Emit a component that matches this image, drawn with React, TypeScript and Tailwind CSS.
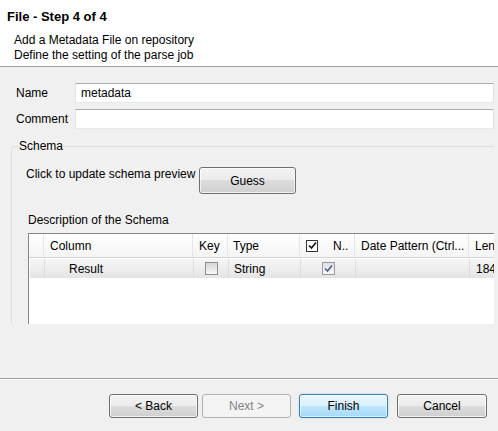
import React from 'react'

const btn =
  'w-[89px] h-[24px] rounded-[3px] border border-[#707070] bg-[linear-gradient(#f2f2f2,#ebebeb_50%,#dddddd_50%,#cfcfcf)] text-black flex items-center justify-center shadow-[inset_0_0_0_1px_rgba(255,255,255,0.7)]'

function Check({ color }: { color: string }) {
  return (
    <svg width="9" height="9" viewBox="0 0 9 9">
      <path d="M1 4.5 L3.5 7 L8 1.5" fill="none" stroke={color} strokeWidth="1.6" />
    </svg>
  )
}

export default function App() {
  return (
    <div
      className="w-[498px] h-[431px] bg-[#f0f0f0] overflow-hidden flex flex-col text-[12px] text-black"
      style={{ fontFamily: '"Liberation Sans", Arial, sans-serif' }}
    >
      {/* Wizard header */}
      <div className="h-[67px] shrink-0 bg-white border-b border-[#a0a0a0]">
        <div className="pl-[7px] pt-[9px] leading-[16px] font-bold text-[13px]">File - Step 4 of 4</div>
        <div className="pl-[14px] mt-[8px] leading-[15px]">
          <div>Add a Metadata File on repository</div>
          <div>Define the setting of the parse job</div>
        </div>
      </div>

      {/* Form */}
      <div className="w-[494px] h-[257px] shrink-0 overflow-hidden">
        <div className="flex items-center mt-[16px] pl-[16px]">
          <div className="w-[59px]">Name</div>
          <div className="w-[419px] h-[20px] bg-white border border-[#e2e3ea] border-t-[#abadb3] border-b-[#e3e9ef] flex items-center pl-[5px]">
            metadata
          </div>
        </div>
        <div className="flex items-center mt-[6px] pl-[16px]">
          <div className="w-[59px]">Comment</div>
          <div className="w-[419px] h-[20px] bg-white border border-[#e2e3ea] border-t-[#abadb3] border-b-[#e3e9ef]" />
        </div>

        {/* Schema group */}
        <div className="relative mt-[17px] ml-[11px] w-[500px] h-[300px] border border-[#d5dfe5] rounded-[3px] pt-[20px] pl-[14px]">
          <div className="absolute left-[6px] -top-[8px] px-[1px] bg-[#f0f0f0] leading-[15px]">Schema</div>

          <div className="flex items-start">
            <div className="w-[173px] leading-[15px]">Click to update schema preview</div>
            <button className="w-[97px] h-[27px] rounded-[3px] border border-[#707070] bg-[linear-gradient(#f2f2f2,#ebebeb_50%,#dddddd_50%,#cfcfcf)] shadow-[inset_0_0_0_1px_rgba(255,255,255,0.7)]">
              Guess
            </button>
          </div>

          <div className="mt-[19px] ml-[2px] leading-[15px]">Description of the Schema</div>

          {/* Schema table */}
          <div className="mt-[5px] ml-[2px] h-[200px] bg-white border border-[#828790]">
            <div className="grid grid-cols-[15px_149px_35px_72px_55px_114px_1fr] h-[24px] border-b border-[#d5d5d5] bg-[linear-gradient(#ffffff,#f4f4f4)]">
              <div className="border-r border-[#e5e5e5]" />
              <div className="border-r border-[#e5e5e5] flex items-center pl-[6px]">Column</div>
              <div className="border-r border-[#e5e5e5] flex items-center pl-[6px]">Key</div>
              <div className="border-r border-[#e5e5e5] flex items-center pl-[5px]">Type</div>
              <div className="border-r border-[#e5e5e5] flex items-center pl-[6px]">
                <div className="w-[12px] h-[12px] border border-[#333] bg-white flex items-center justify-center">
                  <Check color="#111" />
                </div>
                <span className="ml-[15px]">N..</span>
              </div>
              <div className="border-r border-[#e5e5e5] flex items-center pl-[6px] whitespace-nowrap">Date Pattern (Ctrl...</div>
              <div className="flex items-center pl-[6px]">Len</div>
            </div>
            <div className="grid grid-cols-[15px_149px_35px_72px_55px_114px_1fr] h-[19px] mt-[1px] mx-[1px] bg-[linear-gradient(#f6f6f6,#e4e4e4)]">
              <div className="border-r border-[#dcdcdc]" />
              <div className="border-r border-[#dcdcdc] flex items-center pl-[24px]">Result</div>
              <div className="border-r border-[#dcdcdc] flex items-center justify-center">
                <div className="w-[13px] h-[13px] border border-[#8f8f8f] bg-[linear-gradient(#d6d6d6,#f7f7f7)]" />
              </div>
              <div className="border-r border-[#dcdcdc] flex items-center pl-[5px]">String</div>
              <div className="border-r border-[#dcdcdc] flex items-center justify-center">
                <div className="w-[13px] h-[13px] border border-[#9a9a9a] bg-[linear-gradient(#e0e0e0,#f8f8f8)] flex items-center justify-center">
                  <Check color="#4a5f9c" />
                </div>
              </div>
              <div className="border-r border-[#dcdcdc]" />
              <div className="flex items-center pl-[6px]">184</div>
            </div>
          </div>
        </div>
      </div>

      {/* Footer */}
      <div className="mt-[54px] border-t border-[#a0a0a0]" />
      <div className="border-t border-white" />
      <div className="flex pt-[14px] pl-[109px]">
        <button className={btn}>&lt; Back</button>
        <button className="ml-[4px] w-[89px] h-[24px] rounded-[3px] border border-[#adb2b5] bg-[#f4f4f4] text-[#838383] flex items-center justify-center">
          Next &gt;
        </button>
        <button className="ml-[8px] w-[89px] h-[24px] rounded-[3px] border border-[#3c7fb1] bg-[linear-gradient(#eaf6fd,#d9f0fc_50%,#bee6fd_50%,#a7d9f5)] shadow-[inset_0_0_0_1px_rgba(255,255,255,0.6),0_0_2px_#8cd0f5] flex items-center justify-center">
          Finish
        </button>
        <button className={`ml-[9px] ${btn} w-[90px]`}>Cancel</button>
      </div>
    </div>
  )
}
